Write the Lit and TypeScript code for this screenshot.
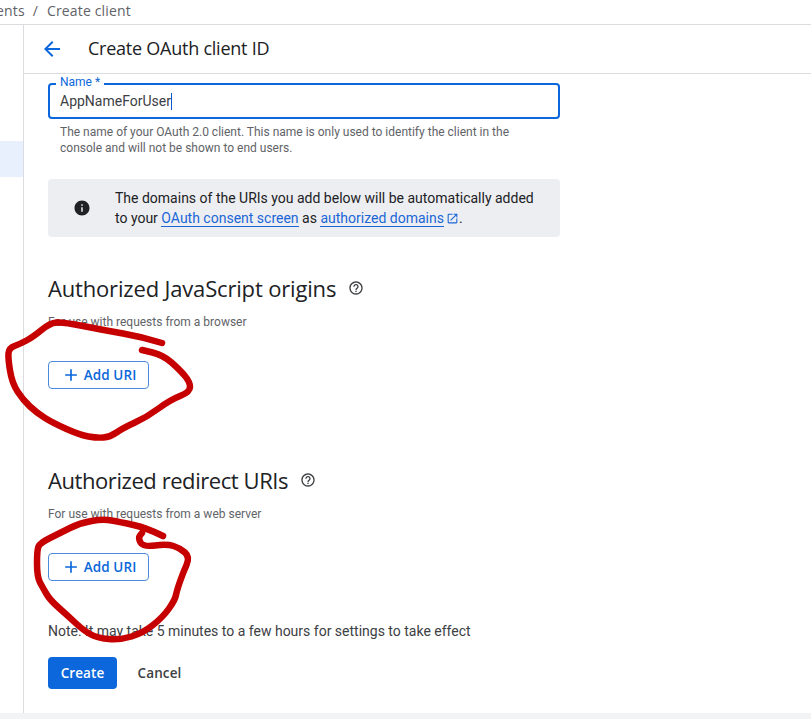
import { LitElement, html, css, svg } from "lit";
import { customElement } from "lit/decorators.js";

const scribbles: number[][][] = [
  [[162,343],[143,337],[103,330],[63,322],[50,323],[33,337],[20,344],[9,348],[8,358],[12,383],[23,400],[37,413],[53,423],[80,435],[97,438],[110,437],[123,428],[147,417],[170,400],[190,392],[190,382],[180,370],[163,355],[142,350]],
  [[163,536],[147,528],[120,522],[103,519],[80,523],[60,533],[40,543],[37,550],[37,577],[43,588],[50,600],[67,615],[83,630],[97,638],[120,640],[143,633],[163,617],[175,600],[177,590],[183,573],[190,557],[180,548],[167,544],[143,547],[138,538],[142,533]],
];

const smooth = (pts: number[][]) => {
  let d = `M${pts[0][0]} ${pts[0][1]}`;
  for (let i = 1; i < pts.length - 1; i++) {
    const mx = (pts[i][0] + pts[i + 1][0]) / 2;
    const my = (pts[i][1] + pts[i + 1][1]) / 2;
    d += ` Q${pts[i][0]} ${pts[i][1]} ${mx} ${my}`;
  }
  const last = pts[pts.length - 1];
  return `${d} L${last[0]} ${last[1]}`;
};

@customElement("add-uri-section")
class AddUriSection extends LitElement {
  static properties = { heading: {}, sub: {} };
  heading = "";
  sub = "";
  static styles = css`
    :host { display: block; }
    .head { display: flex; align-items: center; gap: 12px; height: 32px; }
    h2 { margin: 0; font: 400 22px/32px "Open Sans", sans-serif; color: #202124; letter-spacing: var(--track, 0); }
    .help { width: 16px; height: 16px; fill: #3c4043; }
    p { margin: 0; padding-top: 10px; font: 400 12px/16px Roboto, sans-serif; color: #5f6368; }
    button { display: flex; align-items: center; justify-content: center; gap: 3px; margin-top: 31px; width: 101px; height: 28px; box-sizing: border-box; padding: 0; border: 1px solid #4c8bdc; border-radius: 4px; background: #fff; color: #0b67db; font: 600 13.5px/26px "Open Sans", sans-serif; letter-spacing: 0.1px; }
    button svg { width: 20px; height: 20px; fill: #0b67db; }
  `;
  render() {
    return html`
      <div class="head">
        <h2>${this.heading}</h2>
        <svg class="help" viewBox="0 0 24 24"><path d="M11 18h2v-2h-2v2zm1-16C6.48 2 2 6.48 2 12s4.48 10 10 10 10-4.48 10-10S17.52 2 12 2zm0 18c-4.41 0-8-3.59-8-8s3.59-8 8-8 8 3.59 8 8-3.59 8-8 8zm0-14c-2.21 0-4 1.79-4 4h2c0-1.1.9-2 2-2s2 .9 2 2c0 2-3 1.75-3 5h2c0-2.25 3-2.5 3-5 0-2.21-1.79-4-4-4z"/></svg>
      </div>
      <p>${this.sub}</p>
      <button><svg viewBox="0 0 24 24"><path d="M19 13h-6v6h-2v-6H5v-2h6V5h2v6h6v2z"/></svg>Add URI</button>
    `;
  }
}

@customElement("app-root")
class AppRoot extends LitElement {
  static styles = css`
    :host { display: flex; flex-direction: column; position: relative; width: 811px; height: 719px; overflow: hidden; background: #fff; font-family: Roboto, sans-serif; }
    .crumbs { flex: none; display: flex; align-items: center; height: 22px; padding: 0 0 2px; margin-left: -4px; border-bottom: 1px solid #dadce0; font: 500 14px/22px "Open Sans", sans-serif; color: #5f6368; letter-spacing: 0.15px; }
    .crumbs .sep { margin: 0 9px 0 8px; font-weight: 400; }
    .body { flex: 1; display: flex; min-height: 0; }
    .side { flex: none; width: 23px; border-right: 1px solid #dadce0; padding-top: 116px; }
    .side div { height: 36px; background: #e8f0fe; }
    .main { flex: 1; display: flex; flex-direction: column; min-width: 0; }
    .top { flex: none; display: flex; align-items: center; height: 48px; border-bottom: 1px solid #dadce0; padding-left: 16px; }
    .top svg { width: 24px; height: 24px; fill: #0b67db; }
    .top h1 { margin: 0 0 2px 24px; font: 400 18px/24px "Open Sans", sans-serif; color: #202124; letter-spacing: -0.24px; }
    .content { padding: 9px 0 0 24px; width: 512px; }
    .field { position: relative; box-sizing: border-box; height: 36px; border: 2px solid #0b67db; border-radius: 4px; padding: 0 10px; display: flex; align-items: center; font: 400 14px/20px Roboto, sans-serif; color: #3c4043; }
    .field label { position: absolute; left: 6px; top: -11px; padding: 0 4px; background: #fff; font: 400 12px/16px Roboto, sans-serif; color: #0b67db; }
    .caret { width: 1px; height: 17px; background: #0b57d0; }
    .hint { margin: 0; padding: 5px 12px 0; font: 400 12px/16px Roboto, sans-serif; color: #5f6368; }
    .info { display: flex; align-items: center; margin-top: 23px; height: 58px; box-sizing: border-box; background: #edeef2; border-radius: 4px; padding: 0 16px 0 25px; font: 400 14px/20px Roboto, sans-serif; color: #202124; }
    .info > svg { flex: none; width: 18px; height: 18px; fill: #202124; margin-right: 24px; }
    .info a { color: #1a66d6; text-decoration: none; border-bottom: 1px solid #1a66d6; }
    .info .ext { display: inline-block; width: 13px; height: 13px; margin: 0 0 0 2px; fill: #1a66d6; vertical-align: -2px; }
    .first { margin-top: 35px; --track: -0.17px; }
    .second { margin-top: 75px; --track: -0.43px; }
    .note { margin: 40px 0 0; font: 400 14px/20px Roboto, sans-serif; color: #3c4043; }
    .actions { display: flex; align-items: center; margin-top: 16px; }
    .create { width: 69px; height: 32px; border: 0; border-radius: 4px; background: #0b67db; color: #fff; font: 600 13.5px/32px "Open Sans", sans-serif; letter-spacing: 0.1px; padding: 0; }
    .cancel { margin-left: 8px; width: 69px; height: 32px; border: 0; background: none; color: #3c4043; font: 600 13.5px/32px "Open Sans", sans-serif; letter-spacing: 0.1px; padding: 0; }
    .foot { flex: none; height: 6px; background: #f1f3f4; }
    .ink { position: absolute; inset: 0; width: 811px; height: 719px; pointer-events: none; }
    .ink path { fill: none; stroke: #c60000; stroke-width: 6.5; stroke-linecap: round; stroke-linejoin: round; }
  `;
  render() {
    return html`
      <div class="crumbs"><span>ents</span><span class="sep">/</span><span>Create client</span></div>
      <div class="body">
        <div class="side"><div></div></div>
        <div class="main">
          <div class="top">
            <svg viewBox="0 0 24 24"><path d="M20 11H7.83l5.59-5.59L12 4l-8 8 8 8 1.41-1.41L7.83 13H20v-2z"/></svg>
            <h1>Create OAuth client ID</h1>
          </div>
          <div class="content">
            <div class="field"><label>Name *</label>AppNameForUser<span class="caret"></span></div>
            <p class="hint">The name of your OAuth 2.0 client. This name is only used to identify the client in the console and will not be shown to end users.</p>
            <div class="info">
              <svg viewBox="0 0 24 24"><path d="M12 2C6.48 2 2 6.48 2 12s4.48 10 10 10 10-4.48 10-10S17.52 2 12 2zm1 15h-2v-6h2v6zm0-8h-2V7h2v2z"/></svg>
              <span>The domains of the URIs you add below will be automatically added to your <a>OAuth consent screen</a> as <a>authorized domains</a><svg class="ext" viewBox="0 0 24 24"><path d="M19 19H5V5h7V3H5a2 2 0 0 0-2 2v14a2 2 0 0 0 2 2h14c1.1 0 2-.9 2-2v-7h-2v7zM14 3v2h3.59l-9.83 9.83 1.41 1.41L19 6.41V10h2V3h-7z"/></svg>.</span>
            </div>
            <add-uri-section class="first" heading="Authorized JavaScript origins" sub="For use with requests from a browser"></add-uri-section>
            <add-uri-section class="second" heading="Authorized redirect URIs" sub="For use with requests from a web server"></add-uri-section>
            <p class="note">Note: It may take 5 minutes to a few hours for settings to take effect</p>
            <div class="actions"><button class="create">Create</button><button class="cancel">Cancel</button></div>
          </div>
        </div>
      </div>
      <div class="foot"></div>
      <svg class="ink" viewBox="0 0 811 719">${scribbles.map((p) => svg`<path d=${smooth(p)}></path>`)}</svg>
    `;
  }
}
